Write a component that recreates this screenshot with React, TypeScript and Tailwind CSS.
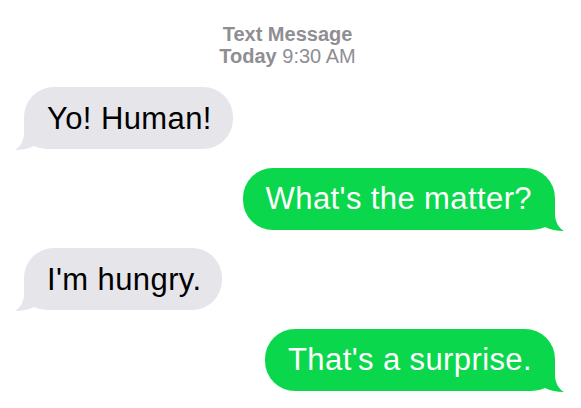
const messages = [
  { text: 'Yo! Human!', mine: false },
  { text: "What's the matter?", mine: true },
  { text: "I'm hungry.", mine: false },
  { text: "That's a surprise.", mine: true },
];

function Tail({ mine }: { mine: boolean }) {
  return (
    <svg
      width="50"
      height="33"
      viewBox="0 0 50 33"
      className={
        mine
          ? 'absolute -right-[10px] -bottom-[1px] -scale-x-100 fill-[#0bd74c]'
          : 'absolute -left-[10px] -bottom-[1px] fill-[#e5e5ea]'
      }
    >
      <path d="M10 0 L10 16 C10 24 6 30 1 33 C8 33 15 31.5 20 29 C25 31.5 32 32 40 32 L50 32 L50 0 Z" />
    </svg>
  );
}

function Bubble({ text, mine }: { text: string; mine: boolean }) {
  return (
    <div
      className={
        mine
          ? 'relative self-end mr-[26px] h-[62px] flex items-center px-[23px] rounded-[30px] bg-[#0bd74c] text-white'
          : 'relative self-start ml-[24px] h-[62px] flex items-center pl-[23px] pr-[21px] rounded-[30px] bg-[#e5e5ea] text-black'
      }
    >
      <Tail mine={mine} />
      <span className="relative text-[31px] tracking-[0.4px] leading-none whitespace-nowrap">{text}</span>
    </div>
  );
}

export default function App() {
  return (
    <div
      className="w-full min-h-screen bg-white"
      style={{ fontFamily: '"Liberation Sans", Arial, sans-serif' }}
    >
      <div className="flex flex-col items-center pt-[23px] pr-[6px] text-[20px] leading-[22px] text-[#8e8e93]">
        <div className="font-semibold">Text Message</div>
        <div>
          <span className="font-semibold">Today</span> 9:30 AM
        </div>
      </div>

      <div className="flex flex-col gap-[18.5px] mt-[20px]">
        {messages.map((m, i) => (
          <Bubble key={i} text={m.text} mine={m.mine} />
        ))}
      </div>
    </div>
  );
}
